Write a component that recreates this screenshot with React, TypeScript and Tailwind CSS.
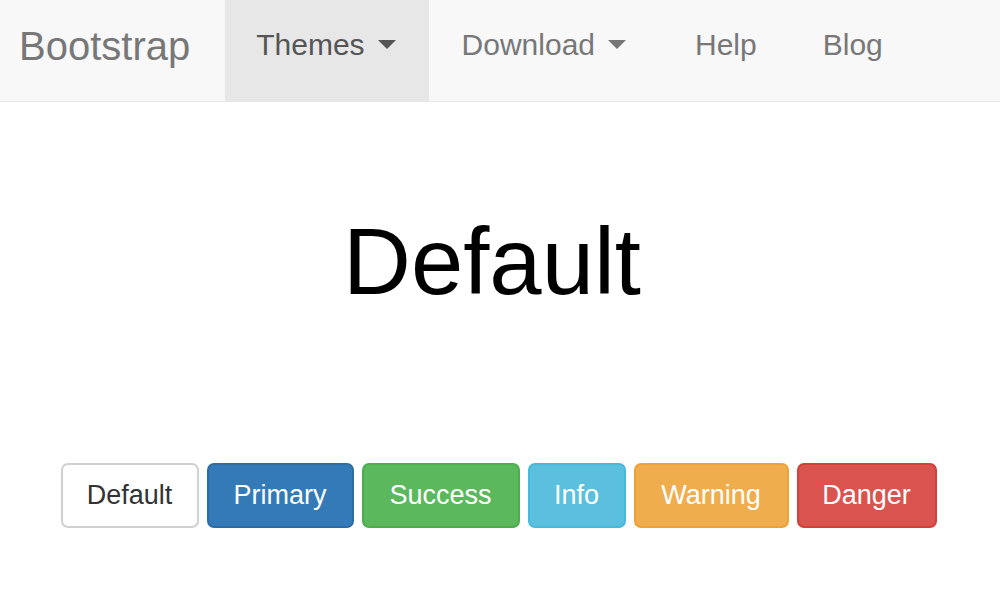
function Caret() {
  return (
    <span className="ml-[13px] inline-block h-0 w-0 border-x-[9px] border-t-[9px] border-x-transparent border-t-current" />
  );
}

const buttons = [
  { label: "Default", cls: "w-[138px] bg-white border-[#d0d0d0] text-[#333]" },
  { label: "Primary", cls: "w-[147px] bg-[#337ab7] border-[#2e6da4] text-white" },
  { label: "Success", cls: "w-[158px] bg-[#5cb85c] border-[#4cae4c] text-white" },
  { label: "Info", cls: "w-[98px] bg-[#5bc0de] border-[#46b8da] text-white" },
  { label: "Warning", cls: "w-[155px] bg-[#f0ad4e] border-[#eea236] text-white" },
  { label: "Danger", cls: "w-[140px] bg-[#d9534f] border-[#d43f3a] text-white" },
];

function Navbar() {
  return (
    <div className="flex h-[102px] w-full items-stretch border-b-[1px] border-[#e7e7e7] bg-[#f8f8f8]">
      <a href="#" className="flex items-center pb-[10px] pl-[19px] pr-[35px] text-[40px] text-[#777]">
        Bootstrap
      </a>
      <ul className="flex items-stretch text-[30px] text-[#777]">
        <li className="flex items-center bg-[#e7e7e7] pb-[12px] pl-[31px] pr-[33px] text-[#555]">
          Themes
          <Caret />
        </li>
        <li className="flex items-center pb-[12px] pl-[33px] pr-[35px]">
          Download
          <Caret />
        </li>
        <li className="flex items-center pb-[12px] pl-[34px] pr-[33px]">Help</li>
        <li className="flex items-center pb-[12px] px-[33px]">Blog</li>
      </ul>
    </div>
  );
}

export default function App() {
  return (
    <div
      className="h-[600px] w-[1000px] overflow-hidden bg-white"
      style={{ fontFamily: "'Liberation Sans', Arial, sans-serif" }}
    >
      <Navbar />
      <h1 className="mt-[113px] pr-[16px] text-center text-[94px] leading-none text-black">Default</h1>
      <div className="mt-[154px] flex justify-center gap-[8px] pr-[3px]">
        {buttons.map((b) => (
          <button
            key={b.label}
            className={`flex h-[65px] items-center justify-center rounded-[7px] border-2 text-[27px] ${b.cls}`}
          >
            {b.label}
          </button>
        ))}
      </div>
    </div>
  );
}
